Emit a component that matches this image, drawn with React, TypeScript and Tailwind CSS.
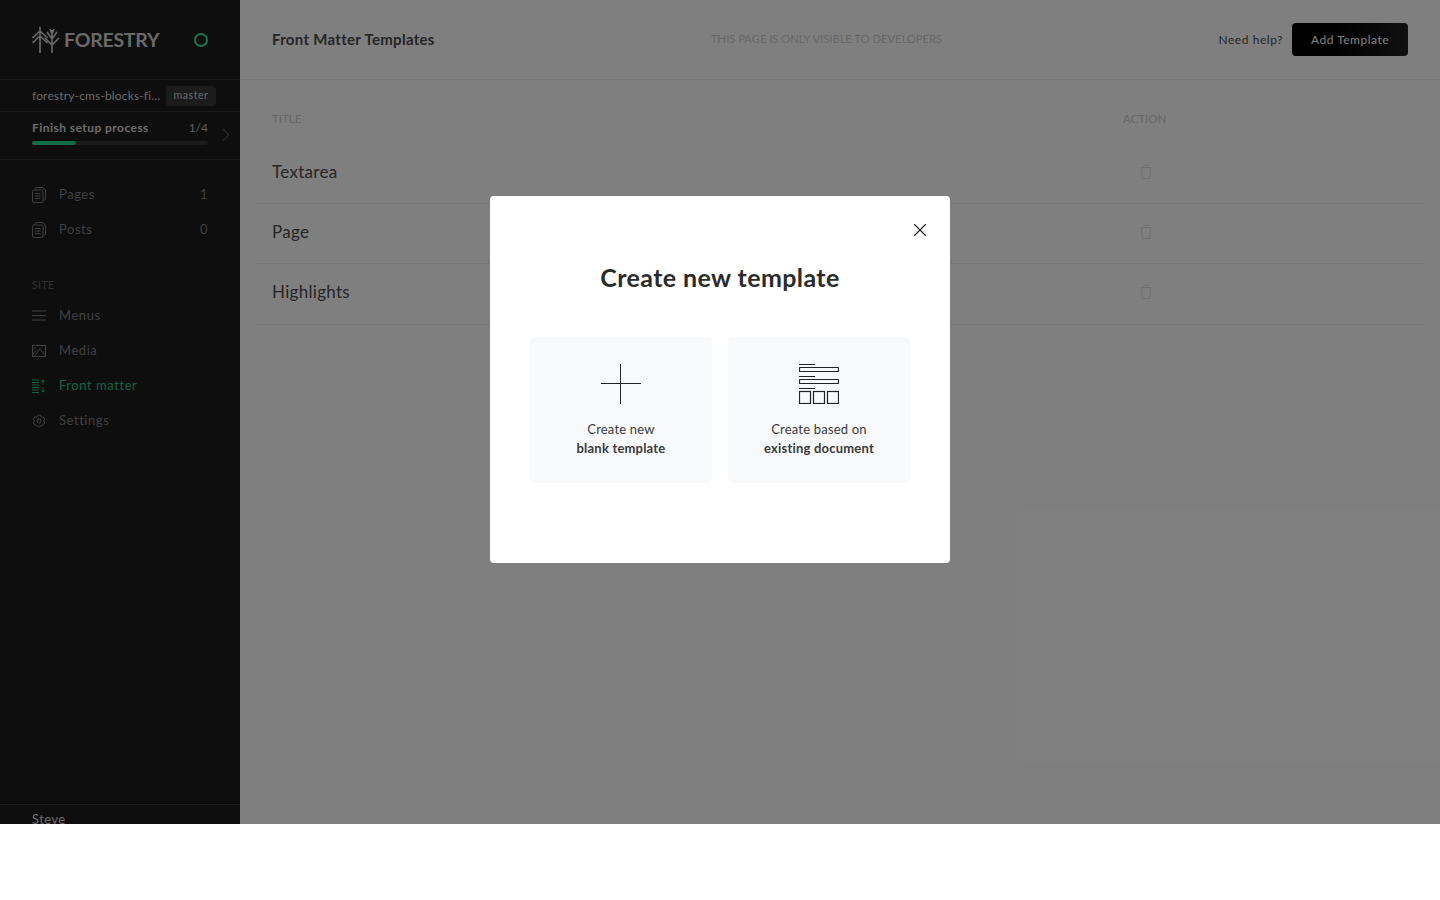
import { ChevronRight, X } from 'lucide-react';

const font = "font-['Lato','Noto_Sans',sans-serif]";

function DocIcon() {
  return (
    <svg width="14" height="16" viewBox="0 0 14 16" fill="none" stroke="currentColor" strokeWidth="1">
      <path d="M3.5 2.5V1.5a1 1 0 0 1 1-1h6l3 2.5v9a1 1 0 0 1-1 1h-1" />
      <rect x="0.5" y="3" width="10.5" height="12.5" rx="1.5" />
      <path d="M3 6.5h5.5M3 9h5.5M3 11.5h5.5" />
    </svg>
  );
}

function MenuIcon() {
  return (
    <svg width="14" height="11" viewBox="0 0 14 11" stroke="currentColor" strokeWidth="1.2">
      <path d="M0 1h14M0 5.5h14M0 10h14" />
    </svg>
  );
}

function MediaIcon() {
  return (
    <svg width="14" height="12" viewBox="0 0 14 12" fill="none" stroke="currentColor" strokeWidth="1">
      <rect x="0.5" y="0.5" width="13" height="11" />
      <path d="M3 10.5l5-7 4.5 6.5M0.5 5l3-3M1 9l4-4.5" />
    </svg>
  );
}

function MatterIcon() {
  return (
    <svg width="14" height="14" viewBox="0 0 14 14" fill="none" stroke="currentColor" strokeWidth="1">
      <path d="M0 1h7M0 3.5h7M0 6h7M0 8.5h7M0 11h7M0 13.5h7" />
      <path d="M11 5.5V1M9.2 2.6L11 .8l1.8 1.8M11 8.5V13M9.2 11.4l1.8 1.8 1.8-1.8" />
    </svg>
  );
}

function GearIcon() {
  return (
    <svg width="14" height="14" viewBox="0 0 14 14" fill="none" stroke="currentColor" strokeWidth="1">
      <path d="M4.65 2.93A2.4 2.4 0 0 1 9.35 2.93A2.4 2.4 0 0 1 11.7 7A2.4 2.4 0 0 1 9.35 11.07A2.4 2.4 0 0 1 4.65 11.07A2.4 2.4 0 0 1 2.3 7A2.4 2.4 0 0 1 4.65 2.93Z" />
      <circle cx="7" cy="7" r="2" />
    </svg>
  );
}

function TrashIcon() {
  return (
    <svg width="12" height="14" viewBox="0 0 12 14" fill="none" stroke="currentColor" strokeWidth="1">
      <path d="M0.5 2.5h11M3 .5h6M1.5 2.5l.7 11h7.6l.7-11" />
    </svg>
  );
}

function Logo() {
  return (
    <svg width="28" height="28" viewBox="0 0 28 28" fill="none" stroke="currentColor" strokeWidth="1.6">
      <path d="M8 1v26M0.5 12L8 5l7.5 7M0.5 17L8 10l7.5 7" />
      <path d="M20 4v23M20 19l-7-7M20 19l7-7M20 13l-5-7M20 13l5-7M20 8l-2-5M20 8l2-5" />
    </svg>
  );
}

function NavItem({
  icon,
  label,
  count,
  active,
}: {
  icon: React.ReactNode;
  label: string;
  count?: string;
  active?: boolean;
}) {
  return (
    <div className={`flex h-[35px] items-center pl-8 pr-8 text-[13px] tracking-[0.55px] ${active ? 'text-[#26c583]' : 'text-[#808080]'}`}>
      <span className="flex w-[27px] shrink-0 items-center">{icon}</span>
      <span className="flex-1">{label}</span>
      {count && <span>{count}</span>}
    </div>
  );
}

function TemplateRow({ title }: { title: string }) {
  return (
    <div className="flex h-[60.2px] items-center border-b border-[#eaeaea] pl-4 text-[#4c4c4c]">
      <span className="w-[868px] pb-1 text-[17px] tracking-[0.3px]">{title}</span>
      <span className="pb-[3px] text-[#e0e0e0]">
        <TrashIcon />
      </span>
    </div>
  );
}

function ChoiceCard({
  icon,
  top,
  bottom,
}: {
  icon: React.ReactNode;
  top: string;
  bottom: string;
}) {
  return (
    <div className="flex h-[146px] w-[183px] flex-col items-center rounded-md bg-[#f8f9fb] pt-[27px] text-[13px] leading-[19px] tracking-[0.2px] text-[#3a3a3a]">
      <div className="mb-[16px] flex h-[40px] items-center text-[#222]">{icon}</div>
      <span>{top}</span>
      <span className="font-bold">{bottom}</span>
    </div>
  );
}

export default function App() {
  return (
    <div className={`relative flex h-[824px] overflow-hidden bg-white ${font}`}>
      <aside className="flex w-[240px] shrink-0 flex-col bg-[#1c1c1c]">
        <div className="flex h-[80px] shrink-0 items-center justify-between border-b border-[#363636] pl-8 pr-8 text-[#d4d4d4]">
          <div className="flex items-center gap-[4px]">
            <Logo />
            <span className="text-[19.5px] font-bold tracking-[-0.25px]">FORESTRY</span>
          </div>
          <span className="size-[14px] rounded-full border-2 border-[#2ee89e]" />
        </div>
        <div className="flex h-[32px] shrink-0 items-center justify-between border-b border-[#363636] pl-8 pr-6 pt-[1px] text-[12px] text-[#d0d0d0]">
          <span className="whitespace-nowrap tracking-[0.15px]">forestry-cms-blocks-fi…</span>
          <span className="flex h-[20px] w-[50px] items-center justify-center rounded bg-[#383838] text-[10.5px] tracking-[0.6px]">master</span>
        </div>
        <div className="relative h-[48px] shrink-0 border-b border-[#363636] pl-8 pr-8 pt-[7px] text-[#d8d8d8]">
          <div className="flex items-center justify-between text-[12px]">
            <span className="font-bold tracking-[0.45px]">Finish setup process</span>
            <span className="text-[12px] font-normal text-[#bcbcbc]">1/4</span>
          </div>
          <div className="mt-[4px] h-[4px] rounded-full bg-[#383838]">
            <div className="h-full w-1/4 rounded-full bg-[#28d690]" />
          </div>
          <ChevronRight className="absolute right-[3px] top-[12px] text-[#7e7e7e]" size={22} strokeWidth={1} />
        </div>
        <div className="mt-[17px]">
          <NavItem icon={<DocIcon />} label="Pages" count="1" />
          <NavItem icon={<DocIcon />} label="Posts" count="0" />
        </div>
        <div className="mb-[5px] mt-[30px] pl-8 text-[10.5px] leading-[16px] tracking-[0.4px] text-[#646464]">SITE</div>
        <NavItem icon={<MenuIcon />} label="Menus" />
        <NavItem icon={<MediaIcon />} label="Media" />
        <NavItem icon={<MatterIcon />} label="Front matter" active />
        <NavItem icon={<GearIcon />} label="Settings" />
        <div className="mt-auto h-[20px] border-t border-[#363636] pl-8 pt-[5px] text-[13px] leading-[18px] tracking-[0.4px] text-[#d8d8d8]">
          Steve
        </div>
      </aside>

      <main className="flex-1 bg-white">
        <header className="flex h-[80px] items-center justify-between border-b border-[#eaeaea] pl-8 pr-8">
          <h1 className="w-[439px] text-[15px] font-bold tracking-[0.3px] text-[#4c4c4c]">Front Matter Templates</h1>
          <span className="flex-1 text-[11.2px] text-[#cfcfcf]">THIS PAGE IS ONLY VISIBLE TO DEVELOPERS</span>
          <span className="mr-[9px] text-[12px] tracking-[0.55px] text-[#4c4c4c]">Need help?</span>
          <button className="h-[33px] w-[116px] rounded bg-gradient-to-r from-black to-[#222] text-center text-[12px] tracking-[0.5px] text-white">
            Add Template
          </button>
        </header>
        <div className="px-4">
          <div className="flex h-[64px] items-end pb-[17px] pl-4 text-[11.5px] leading-[16px] text-[#cfcfcf]">
            <span className="w-[851px]">TITLE</span>
            <span>ACTION</span>
          </div>
          <TemplateRow title="Textarea" />
          <TemplateRow title="Page" />
          <TemplateRow title="Highlights" />
        </div>
      </main>

      <div className="absolute inset-0 flex justify-center bg-black/50 pt-[196px]">
        <div className="relative h-[367px] w-[460px] rounded bg-white px-10 pt-[63px]">
          <button className="absolute right-[19px] top-[23px] text-[#222]">
            <X size={22} strokeWidth={1.2} />
          </button>
          <h2 className="text-center text-[25px] font-bold leading-[36px] tracking-[0.4px] text-[#2b2b2b]">
            Create new template
          </h2>
          <div className="mt-[42px] flex justify-between gap-4">
            <ChoiceCard
              top="Create new"
              bottom="blank template"
              icon={
                <svg width="40" height="40" viewBox="0 0 40 40" stroke="currentColor" strokeWidth="1">
                  <path d="M19.5 0v40M0 19.5h40" />
                </svg>
              }
            />
            <ChoiceCard
              top="Create based on"
              bottom="existing document"
              icon={
                <svg width="40" height="40" viewBox="0 0 40 40" fill="none" stroke="currentColor" strokeWidth="1.2">
                  <path d="M0 .5h16M0 12.5h16M0 24.5h16" strokeWidth="1" />
                  <rect x="0.5" y="3.5" width="39" height="4" rx="0.5" />
                  <rect x="0.5" y="15.5" width="39" height="4" rx="0.5" />
                  <rect x="0.5" y="27.5" width="11" height="12" />
                  <rect x="14.5" y="27.5" width="11" height="12" />
                  <rect x="28.5" y="27.5" width="11" height="12" />
                </svg>
              }
            />
          </div>
        </div>
      </div>
    </div>
  );
}
